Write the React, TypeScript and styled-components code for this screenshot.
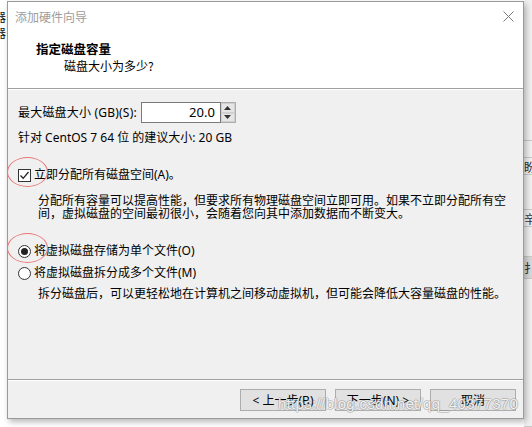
import React from 'react';
import styled, { createGlobalStyle } from 'styled-components';

const GlobalStyle = createGlobalStyle`
  html, body {
    margin: 0;
    padding: 0;
    background: #ffffff;
  }
  body {
    font-family: 'Noto Sans', 'Noto Sans CJK SC', sans-serif;
    font-size: 12px;
    color: #000000;
  }
`;

const App: React.FC = () => {
  return (
    <>
      <GlobalStyle />
      <Screen>
        <LeftStrip>
          <BgGlyph>器</BgGlyph>
          <BgGlyph>器</BgGlyph>
        </LeftStrip>

        <Dialog>
          <Header>
            <TitleBar>
              <TitleText>添加硬件向导</TitleText>
              <CloseIcon viewBox='0 0 11 11'>
                <path d='M0.5 0.5 L10.5 10.5 M10.5 0.5 L0.5 10.5' stroke='#7a7a7a' strokeWidth='1' fill='none' />
              </CloseIcon>
            </TitleBar>
            <Heading>指定磁盘容量</Heading>
            <SubHeading>磁盘大小为多少?</SubHeading>
          </Header>

          <Body>
            <SizeRow>
              <SizeLabel>最大磁盘大小 (GB)(S):</SizeLabel>
              <SpinBox>
                <SpinInput>20.0</SpinInput>
                <SpinButtons>
                  <SpinButton>
                    <svg width='7' height='4' viewBox='0 0 7 4'>
                      <path d='M0 4 L3.5 0 L7 4 Z' fill='#333' />
                    </svg>
                  </SpinButton>
                  <SpinButton>
                    <svg width='7' height='4' viewBox='0 0 7 4'>
                      <path d='M0 0 L3.5 4 L7 0 Z' fill='#333' />
                    </svg>
                  </SpinButton>
                </SpinButtons>
              </SpinBox>
            </SizeRow>
            <Hint>针对 CentOS 7 64 位 的建议大小: 20 GB</Hint>

            <OptionRow $top={21}>
              <Circled />
              <CheckBox>
                <svg width='11' height='11' viewBox='0 0 11 11'>
                  <path d='M1.5 5.5 L4.2 8.3 L9.5 2' stroke='#222' strokeWidth='1.3' fill='none' />
                </svg>
              </CheckBox>
              <span>立即分配所有磁盘空间(A)。</span>
            </OptionRow>
            <Description $top={10}>
              分配所有容量可以提高性能，但要求所有物理磁盘空间立即可用。如果不立即分配所有空
              <br />
              间，虚拟磁盘的空间最初很小，会随着您向其中添加数据而不断变大。
            </Description>

            <OptionRow $top={24}>
              <Circled />
              <Radio $checked />
              <span>将虚拟磁盘存储为单个文件(O)</span>
            </OptionRow>
            <OptionRow $top={6}>
              <Radio />
              <span>将虚拟磁盘拆分成多个文件(M)</span>
            </OptionRow>
            <Description $top={5}>
              拆分磁盘后，可以更轻松地在计算机之间移动虚拟机，但可能会降低大容量磁盘的性能。
            </Description>
          </Body>

          <Footer>
            <Button>&lt; 上一步(B)</Button>
            <Button>下一步(N) &gt;</Button>
            <Button>取消</Button>
            <Watermark>https://blog.csdn.net/qq_40377370</Watermark>
          </Footer>
        </Dialog>

        <RightStrip>
          <RightCell $h={141} />
          <RightCell $h={17} />
          <RightCell $h={17}>盼</RightCell>
          <RightCell $h={35} />
          <RightCell $h={17}>辛</RightCell>
          <RightCell $h={30} />
          <RightCell $h={22} $dark>扌</RightCell>
          <RightCell $h={148} />
        </RightStrip>
      </Screen>
    </>
  );
};

export default App;

const Screen = styled.div`
  display: flex;
  width: 532px;
  height: 427px;
  overflow: hidden;
  background: #ffffff;
`;

const LeftStrip = styled.div`
  width: 7px;
  flex-shrink: 0;
  overflow: hidden;
  padding-top: 9px;
  display: flex;
  flex-direction: column;
`;

const BgGlyph = styled.div`
  font-family: 'Noto Sans CJK SC', sans-serif;
  font-size: 12px;
  line-height: 16px;
  margin-left: -6px;
  color: #111;
`;

const Dialog = styled.div`
  position: relative;
  margin-top: 1px;
  width: 517px;
  height: 418px;
  flex-shrink: 0;
  box-sizing: border-box;
  border: 1px solid #9a9a9a;
  background: #f0f0f0;
  box-shadow: 2px 3px 6px rgba(0, 0, 0, 0.28);
  display: flex;
  flex-direction: column;
  z-index: 1;
`;

const Header = styled.div`
  height: 86px;
  background: #ffffff;
  border-bottom: 1px solid #a0a0a0;
  display: flex;
  flex-direction: column;
`;

const TitleBar = styled.div`
  height: 28px;
  display: flex;
  align-items: center;
  justify-content: space-between;
  padding: 0 8px 2px 7px;
`;

const TitleText = styled.span`
  font-family: 'Noto Sans CJK SC', sans-serif;
  font-size: 12px;
  color: #9d9d9d;
`;

const CloseIcon = styled.svg`
  width: 11px;
  height: 11px;
  margin-right: 1px;
`;

const Heading = styled.div`
  margin: 9px 0 0 28px;
  font-family: 'Noto Sans CJK SC', sans-serif;
  font-size: 12.5px;
  font-weight: 700;
  line-height: 16px;
`;

const SubHeading = styled.div`
  margin: 1px 0 0 56px;
  font-family: 'Noto Sans CJK SC', sans-serif;
  font-size: 12px;
  line-height: 16px;
`;

const Body = styled.div`
  height: 290px;
  border-top: 1px solid #ffffff;
  box-sizing: border-box;
  padding: 12px 0 0 10px;
  display: flex;
  flex-direction: column;
`;

const SizeRow = styled.div`
  display: flex;
  align-items: center;
  gap: 4px;
  height: 21px;
  line-height: 16px;
`;

const SizeLabel = styled.span`
  letter-spacing: 0.2px;
`;

const SpinBox = styled.div`
  display: flex;
  height: 21px;
`;

const SpinInput = styled.div`
  width: 80px;
  box-sizing: border-box;
  border: 1px solid #7a7a7a;
  background: #ffffff;
  font-size: 13px;
  line-height: 19px;
  text-align: right;
  padding-right: 5px;
`;

const SpinButtons = styled.div`
  width: 15px;
  display: flex;
  flex-direction: column;
  box-sizing: border-box;
  border: 1px solid #adadad;
  border-left: none;
  background: #f0f0f0;
`;

const SpinButton = styled.div`
  flex: 1;
  display: flex;
  align-items: center;
  justify-content: center;
  border: 1px solid #d0d0d0;
  background: #e5e5e5;
`;

const Hint = styled.div`
  margin-top: 7px;
  line-height: 16px;
`;

const OptionRow = styled.div<{ $top: number }>`
  position: relative;
  display: flex;
  align-items: center;
  gap: 3px;
  margin-top: ${(p) => p.$top}px;
  height: 16px;
  line-height: 16px;
`;

const Circled = styled.div`
  position: absolute;
  left: -11px;
  top: -10px;
  width: 39px;
  height: 28px;
  border: 1px solid #ea7777;
  border-radius: 50%;
  pointer-events: none;
`;

const CheckBox = styled.div`
  width: 13px;
  height: 13px;
  box-sizing: border-box;
  border: 1px solid #333333;
  background: #ffffff;
  display: flex;
  align-items: center;
  justify-content: center;
`;

const Radio = styled.div<{ $checked?: boolean }>`
  width: 13px;
  height: 13px;
  box-sizing: border-box;
  border: 1px solid #333333;
  border-radius: 50%;
  background: #ffffff;
  display: flex;
  align-items: center;
  justify-content: center;

  &::after {
    content: '';
    display: ${(p) => (p.$checked ? 'block' : 'none')};
    width: 7px;
    height: 7px;
    border-radius: 50%;
    background: #222222;
  }
`;

const Description = styled.div<{ $top: number }>`
  margin-top: ${(p) => p.$top}px;
  padding-left: 20px;
  font-family: 'Noto Sans CJK SC', sans-serif;
  line-height: 13px;
  white-space: nowrap;
`;

const Footer = styled.div`
  position: relative;
  flex: 1;
  border-top: 1px solid #a0a0a0;
  box-shadow: inset 0 1px 0 #ffffff;
  display: flex;
  justify-content: flex-end;
  align-items: flex-start;
  gap: 9px;
  padding: 9px 7px 0 0;
`;

const Button = styled.div`
  width: 86px;
  height: 22px;
  box-sizing: border-box;
  border: 1px solid #adadad;
  background: #e1e1e1;
  display: flex;
  align-items: center;
  justify-content: center;
  font-family: 'Noto Sans', 'Noto Sans CJK SC', sans-serif;
  font-size: 12px;
  white-space: nowrap;
`;

const Watermark = styled.div`
  position: absolute;
  left: 270px;
  top: 15px;
  font-family: 'Liberation Sans', sans-serif;
  font-size: 15px;
  letter-spacing: 0.3px;
  color: rgba(255, 255, 255, 0.85);
  text-shadow:
    1px 0 0 rgba(120, 120, 120, 0.35),
    -1px 0 0 rgba(120, 120, 120, 0.35),
    0 1px 0 rgba(120, 120, 120, 0.35),
    0 -1px 0 rgba(120, 120, 120, 0.35);
  pointer-events: none;
  white-space: nowrap;
`;

const RightStrip = styled.div`
  flex: 1;
  display: flex;
  flex-direction: column;
  background: #f0f0f0;
  overflow: hidden;
`;

const RightCell = styled.div<{ $h: number; $dark?: boolean }>`
  height: ${(p) => p.$h}px;
  flex-shrink: 0;
  box-sizing: border-box;
  border-bottom: 1px solid #c8c8c8;
  background: ${(p) => (p.$dark ? '#d8d8d8' : '#f0f0f0')};
  font-family: 'Noto Sans CJK SC', sans-serif;
  font-size: 12px;
  line-height: ${(p) => p.$h}px;
  color: #333;
  white-space: nowrap;
`;
